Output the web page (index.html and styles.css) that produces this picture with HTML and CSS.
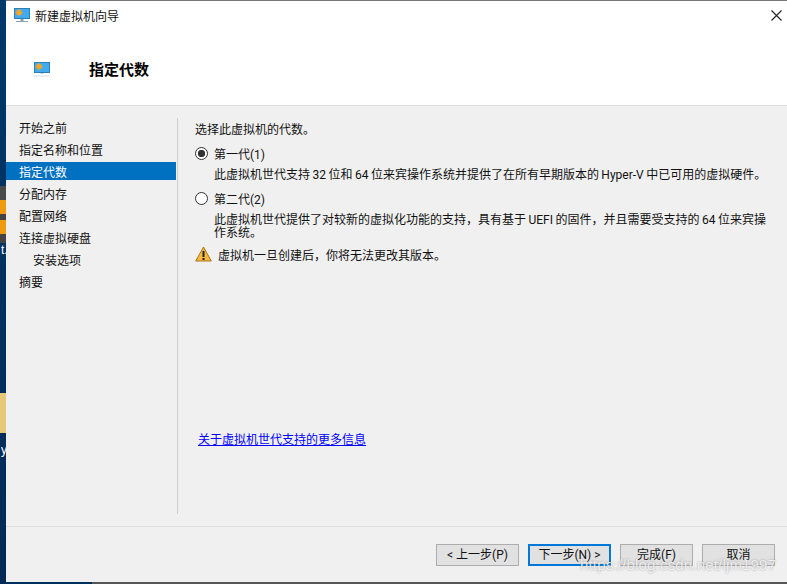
FILE: index.html
```html
<!DOCTYPE html>
<html lang="zh-CN">
<head>
<meta charset="utf-8">
<title>新建虚拟机向导</title>
<link rel="stylesheet" href="styles.css">
</head>
<body>
<div class="desktop">
  <aside class="strip">
    <div class="strip-orange"></div>
    <div class="strip-label">t.</div>
    <div class="strip-tan"></div>
    <div class="strip-label strip-label-y">y</div>
  </aside>
  <div class="window">
    <header class="titlebar">
      <svg class="icon icon-small" viewBox="0 0 16 15"><rect x="0.5" y="0.5" width="15" height="10" fill="#42aaf0" stroke="#2a7fb5"/><circle cx="5" cy="4.5" r="2.6" fill="#f5a623"/><path d="M5 0.8v7.4M1.3 4.5h7.4M2.4 1.9l5.2 5.2M7.6 1.9l-5.2 5.2" stroke="#f5a623"/><rect x="6.5" y="11" width="3" height="2" fill="#8aa2b2"/><rect x="2" y="13" width="12" height="1" fill="#8aa2b2"/></svg>
      <span class="title-text">新建虚拟机向导</span>
      <svg class="close" viewBox="0 0 11 11"><path d="M0.5 0.5l10 10M10.5 0.5l-10 10" stroke="#222" stroke-width="1.1" fill="none"/></svg>
    </header>
    <div class="banner">
      <svg class="icon icon-banner" viewBox="0 0 16 15"><rect x="0.5" y="0.5" width="15" height="10" fill="#42aaf0" stroke="#2a7fb5"/><circle cx="5" cy="4.5" r="2.6" fill="#f5a623"/><path d="M5 0.8v7.4M1.3 4.5h7.4M2.4 1.9l5.2 5.2M7.6 1.9l-5.2 5.2" stroke="#f5a623"/><rect x="6.5" y="11" width="3" height="1" fill="#b9d3e2"/><rect x="0" y="13.5" width="16" height="1" fill="#cfdbe2"/></svg>
      <h1 class="banner-title">指定代数</h1>
    </div>
    <main class="body">
      <nav class="steps">
        <div class="step">开始之前</div>
        <div class="step">指定名称和位置</div>
        <div class="step step-active">指定代数</div>
        <div class="step">分配内存</div>
        <div class="step">配置网络</div>
        <div class="step">连接虚拟硬盘</div>
        <div class="step step-sub">安装选项</div>
        <div class="step">摘要</div>
      </nav>
      <section class="content">
        <p class="intro">选择此虚拟机的代数。</p>
        <div class="option">
          <span class="radio radio-on"></span><span>第一代(1)</span>
        </div>
        <p class="desc desc-one">此虚拟机世代支持 32 位和 64 位来宾操作系统并提供了在所有早期版本的 Hyper-V 中已可用的虚拟硬件。</p>
        <div class="option option-two">
          <span class="radio"></span><span>第二代(2)</span>
        </div>
        <p class="desc desc-two">此虚拟机世代提供了对较新的虚拟化功能的支持，具有基于 UEFI 的固件，并且需要受支持的 64 位来宾操作系统。</p>
        <div class="warning">
          <svg class="warn-icon" viewBox="0 0 17 16"><path d="M8.5 1L16.3 15H0.7Z" fill="#f7b93e" stroke="#a8741a" stroke-linejoin="round"/><rect x="7.5" y="5" width="2" height="6" fill="#222"/><rect x="7.5" y="12" width="2" height="2" fill="#222"/></svg>
          <span>虚拟机一旦创建后，你将无法更改其版本。</span>
        </div>
        <a class="more" href="#">关于虚拟机世代支持的更多信息</a>
      </section>
    </main>
    <footer class="footer">
      <button class="btn btn-wide" type="button">&lt; 上一步(P)</button>
      <button class="btn btn-wide btn-default" type="button">下一步(N) &gt;</button>
      <button class="btn" type="button">完成(F)</button>
      <button class="btn" type="button">取消</button>
    </footer>
  </div>
  <div class="bottom-edge"></div>
  <div class="watermark">https://blog.csdn.net/ljm1997</div>
</div>
</body>
</html>
```
FILE: styles.css
```css
* { box-sizing: border-box; }
html, body { margin: 0; padding: 0; }
body {
  width: 787px;
  height: 584px;
  overflow: hidden;
  font-family: Roboto, "Noto Sans CJK SC", sans-serif;
  font-size: 12px;
  color: #111;
  background: #00305c;
}
.desktop {
  position: relative;
  display: grid;
  grid-template-columns: 6px 1fr;
  grid-template-rows: 582px 2px;
  width: 787px;
  height: 584px;
}
.strip {
  grid-row: 1 / 3;
  grid-column: 1;
  display: flex;
  flex-direction: column;
  overflow: hidden;
  background: linear-gradient(#00386b, #002a55);
  font-family: "Liberation Sans", sans-serif;
}
.strip-orange {
  margin-top: 186px;
  height: 57px;
  background: linear-gradient(#4a4a4a 0 14px, #f09a10 14px 28px, #444 28px 34px, #f09a10 34px 48px, #444 48px);
}
.strip-label {
  height: 12px;
  color: #fff;
  font-size: 12px;
  line-height: 14px;
  margin-left: 1px;
}
.strip-tan {
  margin-top: 138px;
  height: 40px;
  background: #e6c878;
}
.strip-label-y { margin-top: 10px; }
.window {
  grid-column: 2;
  grid-row: 1;
  display: flex;
  flex-direction: column;
  background: #f0f0f0;
  border-top: 1px solid #777;
}
.titlebar {
  display: flex;
  align-items: center;
  height: 29px;
  padding: 0 5px 0 8px;
  background: #fff;
}
.icon { display: block; flex: none; }
.icon-small { width: 16px; height: 15px; }
.title-text { margin-left: 5px; }
.close { width: 11px; height: 11px; margin-left: auto; }
.banner {
  display: flex;
  align-items: center;
  height: 76px;
  padding: 1px 0 0 28px;
  background: #fff;
  border-bottom: 1px solid #dfdfdf;
}
.icon-banner { width: 16px; height: 15px; margin-top: 2px; }
.banner-title {
  margin: 0 0 0 39px;
  font-size: 15px;
  font-weight: 700;
  color: #000;
}
.body {
  flex: 1;
  display: flex;
  padding: 12px 0;
  border-bottom: 1px solid #dfdfdf;
  min-height: 0;
}
.steps {
  width: 172px;
  flex: none;
  padding-right: 1px;
  border-right: 1px solid #cfcfcf;
}
.step {
  height: 18px;
  margin-bottom: 4px;
  line-height: 22px;
  padding-left: 13px;
}
.step-active { background: #0070c0; color: #fff; }
.step-sub { padding-left: 27px; }
.content {
  flex: 1;
  display: flex;
  flex-direction: column;
  padding: 0 0 66px 17px;
  min-width: 0;
}
.intro { margin: 4px 0 0; line-height: 16px; }
.option {
  display: flex;
  align-items: center;
  gap: 6px;
  height: 16px;
  margin-top: 7px;
}
.option-two { margin-top: 8px; }
.radio {
  flex: none;
  width: 13px;
  height: 13px;
  border: 1px solid #333;
  border-radius: 50%;
  background: #fff;
}
.radio-on { background: radial-gradient(circle, #333 0 3.4px, #fff 4px); }
.desc {
  margin: 8px 0 0 19px;
  width: 556px;
  line-height: 13px;
  word-spacing: -0.5px;
}
.warning {
  display: flex;
  align-items: center;
  gap: 6px;
  margin-top: 5px;
  height: 18px;
}
.warn-icon { width: 17px; height: 16px; flex: none; }
.more {
  margin: auto 0 0 3px;
  color: #0000ff;
  line-height: 16px;
  align-self: flex-start;
  text-decoration: underline;
}
.footer {
  display: flex;
  justify-content: flex-end;
  gap: 9px;
  height: 55px;
  padding: 17px 12px 0 0;
}
.btn {
  width: 73px;
  height: 22px;
  padding: 0;
  border: 1px solid #adadad;
  background: #e1e1e1;
  color: #111;
  font: inherit;
  line-height: 18px;
}
.btn-wide { width: 83px; }
.btn-default { border: 2px solid #0078d7; }
.bottom-edge {
  grid-column: 2;
  grid-row: 2;
  background: linear-gradient(90deg, #00305c 0 86px, #555 86px);
}
.watermark {
  position: absolute;
  left: 580px;
  top: 556px;
  font-family: "Liberation Sans", sans-serif;
  font-size: 15px;
  letter-spacing: 0.18px;
  line-height: 18px;
  white-space: nowrap;
  color: rgba(255, 255, 255, 0.78);
  text-shadow: 0 0 2px rgba(90, 90, 90, 0.6);
}
```
